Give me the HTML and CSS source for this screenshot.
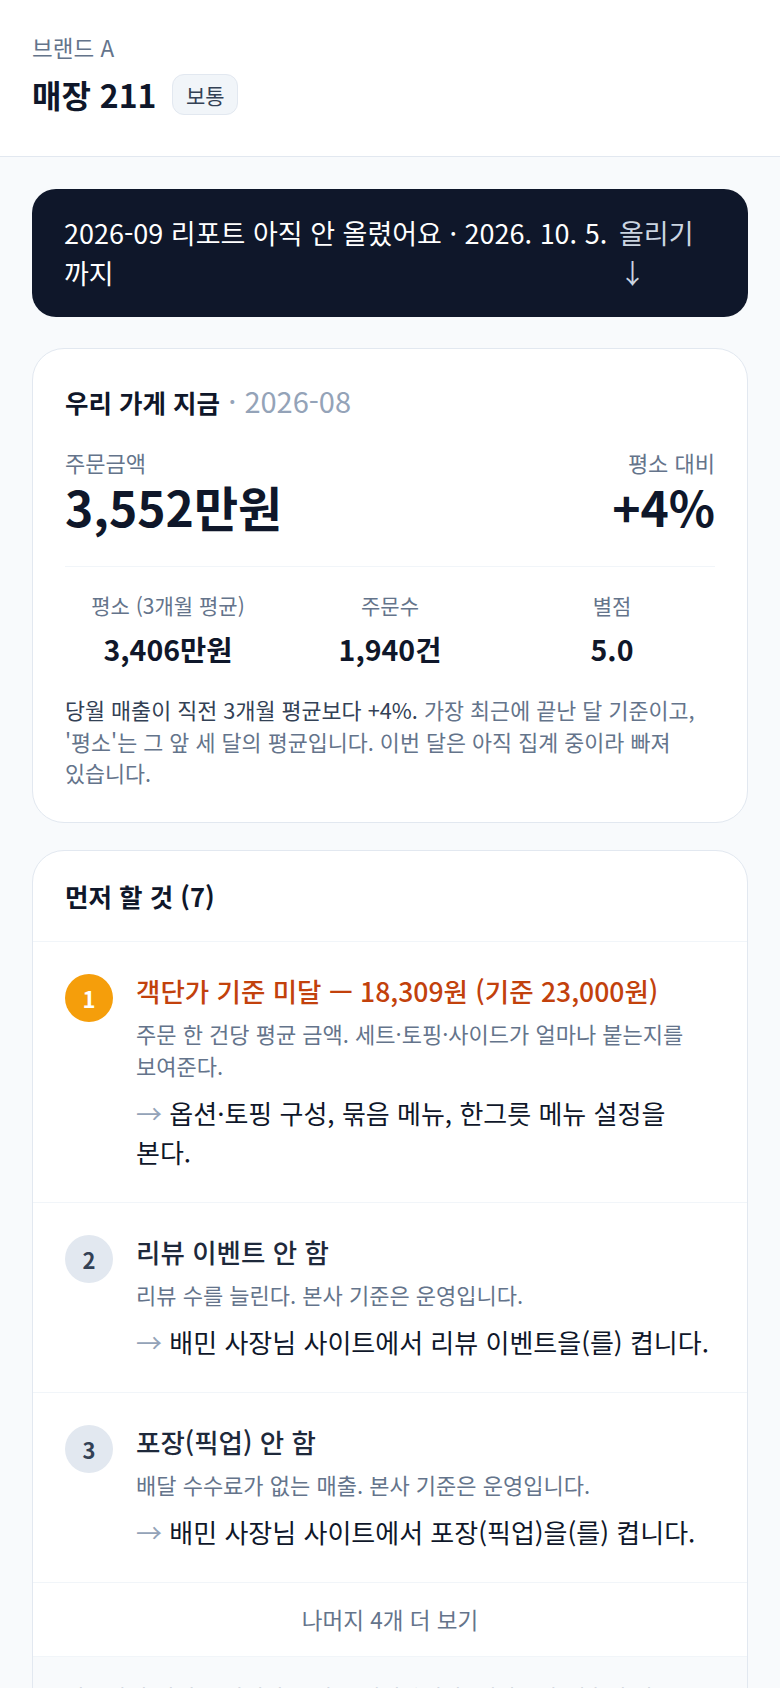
FILE: index.html
```html
<!DOCTYPE html>
<html lang="ko">
<head>
    <meta charset="UTF-8">
    <meta name="viewport" content="width=device-width, initial-scale=1.0">
    <title>매장 211 - 브랜드 A</title>
    <link rel="stylesheet" href="styles.css">
</head>
<body>
    <header class="store-head">
        <div class="brand">브랜드 A</div>
        <div class="store-row">
            <h1 class="store-name">매장 211</h1>
            <span class="grade">보통</span>
        </div>
    </header>

    <main class="page">
        <div class="notice">
            <p class="notice-text">2026-09 리포트 아직 안 올렸어요 · 2026. 10. 5. 까지</p>
            <a class="notice-link" href="#upload">올리기<span class="notice-arrow">↓</span></a>
        </div>

        <section class="card summary">
            <h2 class="card-title">우리 가게 지금<span class="card-sub"> · 2026-08</span></h2>

            <div class="metric">
                <div>
                    <div class="metric-label">주문금액</div>
                    <div class="metric-value">3,552만원</div>
                </div>
                <div class="metric-right">
                    <div class="metric-label">평소 대비</div>
                    <div class="metric-value">+4%</div>
                </div>
            </div>

            <div class="stats">
                <div class="stat">
                    <div class="stat-label">평소 (3개월 평균)</div>
                    <div class="stat-value">3,406만원</div>
                </div>
                <div class="stat">
                    <div class="stat-label">주문수</div>
                    <div class="stat-value">1,940건</div>
                </div>
                <div class="stat">
                    <div class="stat-label">별점</div>
                    <div class="stat-value">5.0</div>
                </div>
            </div>

            <p class="note"><span class="note-main">당월 매출이 직전 3개월 평균보다 +4%.</span> 가장 최근에 끝난 달 기준이고, '평소'는 그 앞 세 달의 평균입니다. 이번 달은 아직 집계 중이라 빠져 있습니다.</p>
        </section>

        <section class="card todo">
            <h2 class="todo-head">먼저 할 것 (7)</h2>

            <div class="todo-item">
                <span class="num num-hot">1</span>
                <div class="todo-body">
                    <div class="todo-title warn">객단가 기준 미달 — 18,309원 (기준 23,000원)</div>
                    <p class="todo-desc">주문 한 건당 평균 금액. 세트·토핑·사이드가 얼마나 붙는지를 보여준다.</p>
                    <p class="todo-action"><span class="go">→</span> 옵션·토핑 구성, 묶음 메뉴, 한그릇 메뉴 설정을 본다.</p>
                </div>
            </div>

            <div class="todo-item">
                <span class="num">2</span>
                <div class="todo-body">
                    <div class="todo-title">리뷰 이벤트 안 함</div>
                    <p class="todo-desc">리뷰 수를 늘린다. 본사 기준은 운영입니다.</p>
                    <p class="todo-action"><span class="go">→</span> 배민 사장님 사이트에서 리뷰 이벤트을(를) 켭니다.</p>
                </div>
            </div>

            <div class="todo-item">
                <span class="num">3</span>
                <div class="todo-body">
                    <div class="todo-title">포장(픽업) 안 함</div>
                    <p class="todo-desc">배달 수수료가 없는 매출. 본사 기준은 운영입니다.</p>
                    <p class="todo-action"><span class="go">→</span> 배민 사장님 사이트에서 포장(픽업)을(를) 켭니다.</p>
                </div>
            </div>

            <button class="more-btn" type="button">나머지 4개 더 보기</button>

            <p class="todo-foot">자동차리 이익을 끼니다 소비로 대리합니다. 생각보다 매출이 낮을 때는 주문 흐름을 먼저 봅니다.</p>
        </section>
    </main>
</body>
</html>
```

FILE: styles.css
```css
* {
    margin: 0;
    padding: 0;
    box-sizing: border-box;
}

body {
    font-family: "Noto Sans CJK KR", "Noto Sans", sans-serif;
    background: #f8fafc;
    color: #0f172a;
    word-break: keep-all;
}

/* header */
.store-head {
    background: #fff;
    padding: 31px 32px 39px;
    border-bottom: 1.5px solid #e2e8f0;
}

.brand {
    font-size: 22.5px;
    line-height: 32px;
    color: #64748b;
}

.store-row {
    display: flex;
    align-items: center;
    gap: 16px;
    margin-top: 9px;
}

.store-name {
    font-size: 32px;
    line-height: 45px;
    font-weight: 700;
}

.grade {
    font-size: 21px;
    line-height: 30px;
    padding: 4.5px 12.5px;
    color: #334155;
    background: #f1f5f9;
    border: 1.5px solid #e2e8f0;
    border-radius: 12px;
}

.page {
    padding: 32px 32px 32px;
}

/* upload notice */
.notice {
    display: flex;
    gap: 8px;
    background: #0f172a;
    color: #fff;
    border-radius: 24px;
    padding: 24px 32px;
    font-size: 27px;
    line-height: 40px;
}

.notice-text {
    flex: 1;
}

.notice-link {
    flex: 0 0 97px;
    color: #cbd5e1;
    text-decoration: none;
}

.notice-arrow {
    display: block;
}

/* cards */
.card {
    background: #fff;
    border: 1.5px solid #e2e8f0;
    border-radius: 32px;
    margin-top: 31px;
}

.summary {
    padding: 33px 32px 33px;
}

.card-title {
    font-size: 25.5px;
    line-height: 36px;
    font-weight: 600;
}

.card-sub {
    font-size: 29px;
    font-weight: 400;
    color: #94a3b8;
}

.metric {
    display: flex;
    justify-content: space-between;
    margin-top: 26px;
    padding-bottom: 32px;
    border-bottom: 1.5px solid #f1f5f9;
}

.metric-right {
    text-align: right;
}

.metric-label {
    font-size: 22px;
    line-height: 32px;
    color: #64748b;
}

.metric-value {
    margin-top: 1px;
    font-size: 48px;
    line-height: 55px;
    font-weight: 700;
}

.stats {
    display: grid;
    grid-template-columns: repeat(3, 1fr);
    gap: 16px;
    padding-top: 23px;
    text-align: center;
}

.stat-label {
    font-size: 21px;
    line-height: 31px;
    color: #64748b;
}

.stat-value {
    margin-top: 7px;
    font-size: 28.5px;
    line-height: 42px;
    font-weight: 700;
}

.note {
    margin-top: 24px;
    font-size: 21.75px;
    line-height: 31.6px;
    color: #64748b;
}

.note-main {
    color: #334155;
}

/* to-do list */
.todo {
    overflow: hidden;
    margin-top: 27px;
}

.todo-head {
    padding: 26px 32px 27px;
    font-size: 25.5px;
    line-height: 37px;
    font-weight: 600;
    border-bottom: 1.5px solid #f1f5f9;
}

.todo-item {
    display: flex;
    gap: 23px;
    padding: 32px 32px 31px;
    border-bottom: 1.5px solid #f1f5f9;
}

.num {
    flex: none;
    width: 48px;
    height: 48px;
    border-radius: 50%;
    display: flex;
    align-items: center;
    justify-content: center;
    font-size: 22px;
    font-weight: 700;
    background: #e2e8f0;
    color: #334155;
}

.num-hot {
    background: #f59e0b;
    color: #fff;
}

.todo-body {
    flex: 1;
}

.todo-title {
    font-size: 26.5px;
    line-height: 33px;
    font-weight: 500;
    color: #1e293b;
}

.todo-title.warn {
    color: #c2410c;
}

.todo-desc {
    margin-top: 10px;
    font-size: 22px;
    line-height: 32px;
    color: #64748b;
}

.todo-action {
    margin-top: 12px;
    font-size: 26px;
    line-height: 39px;
    color: #0f172a;
}

.go {
    color: #94a3b8;
}

.more-btn {
    display: block;
    width: 100%;
    padding: 20px 0;
    font: inherit;
    font-size: 22.5px;
    line-height: 33px;
    color: #64748b;
    background: #fff;
    border: none;
    border-bottom: 1.5px solid #f1f5f9;
    cursor: pointer;
}

.todo-foot {
    background: #f8fafc;
    padding: 24px 32px;
    font-size: 22.5px;
    line-height: 33px;
    color: #64748b;
}
```
